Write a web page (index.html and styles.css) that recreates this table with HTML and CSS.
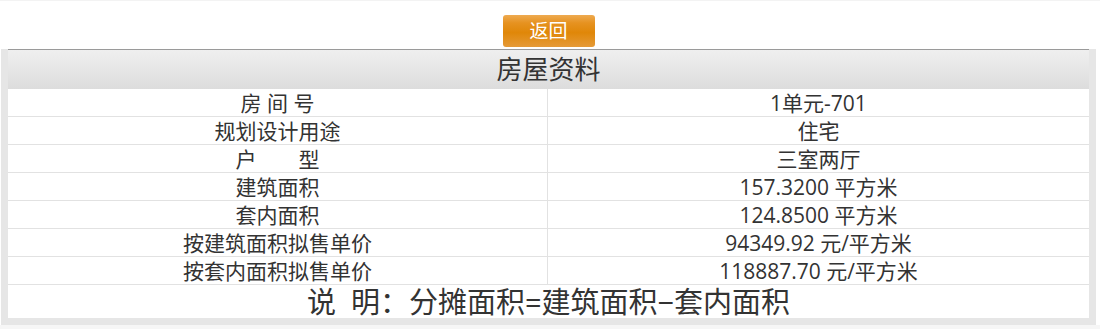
FILE: index.html
```html
<!DOCTYPE html>
<html lang="zh-CN">
<head>
<meta charset="utf-8">
<title>房屋资料</title>
<link rel="stylesheet" href="styles.css">
</head>
<body>
<div class="page">
  <div class="top">
    <a class="back-btn" href="#">返回</a>
  </div>
  <div class="panel">
    <div class="info">
      <div class="info-head">房屋资料</div>
      <div class="info-row"><div class="cell label">房 间 号</div><div class="cell value">1单元-701</div></div>
      <div class="info-row"><div class="cell label">规划设计用途</div><div class="cell value">住宅</div></div>
      <div class="info-row"><div class="cell label">户　　型</div><div class="cell value">三室两厅</div></div>
      <div class="info-row"><div class="cell label">建筑面积</div><div class="cell value">157.3200 平方米</div></div>
      <div class="info-row"><div class="cell label">套内面积</div><div class="cell value">124.8500 平方米</div></div>
      <div class="info-row"><div class="cell label">按建筑面积拟售单价</div><div class="cell value">94349.92 元/平方米</div></div>
      <div class="info-row"><div class="cell label">按套内面积拟售单价</div><div class="cell value">118887.70 元/平方米</div></div>
      <div class="info-note">说&nbsp;&nbsp;明：分摊面积=建筑面积−套内面积</div>
    </div>
  </div>
  <div class="foot"></div>
</div>
</body>
</html>
```

FILE: styles.css
```css
html, body {
  margin: 0;
  padding: 0;
  background: #ffffff;
}

body {
  font-family: "Open Sans", "Noto Sans CJK SC", sans-serif;
  color: #333333;
}

.page {
  border-top: 1px solid #f3f3f3;
}

.top {
  height: 48px;
  display: flex;
  justify-content: center;
  align-items: flex-start;
  padding-left: 1px;
  width: 1095px;
}

.back-btn {
  margin-top: 14px;
  width: 92px;
  height: 32px;
  border-radius: 3px;
  background: linear-gradient(to bottom, #eeaa50 0%, #e69220 25%, #e08708 55%, #e59a38 100%);
  color: #ffffff;
  text-decoration: none;
  font-size: 19px;
  line-height: 32px;
  text-align: center;
  display: block;
}

.panel {
  margin-left: 1px;
  width: 1081px;
  padding: 0 7px 7px;
  background: #e6e6e6;
}

.info {
  background: #ffffff;
}

.info-head {
  border-top: 1px solid #9a9a9a;
  height: 39px;
  line-height: 38px;
  text-align: center;
  font-size: 26px;
  background: linear-gradient(to bottom, #efefef 0%, #e8e8e8 40%, #dcdcdc 100%);
  color: #333333;
}

.info-row {
  display: grid;
  grid-template-columns: 540px 1fr;
  height: 28px;
  border-bottom: 1px solid #e2e2e2;
  box-sizing: border-box;
}

.cell {
  text-align: center;
  font-size: 21px;
  line-height: 28px;
  white-space: nowrap;
}

.label {
  border-right: 1px solid #e2e2e2;
}

.info-note {
  height: 33px;
  line-height: 34px;
  text-align: center;
  font-size: 29px;
  white-space: nowrap;
}

.foot {
  height: 10px;
  background: #f6f6f6;
}
```
